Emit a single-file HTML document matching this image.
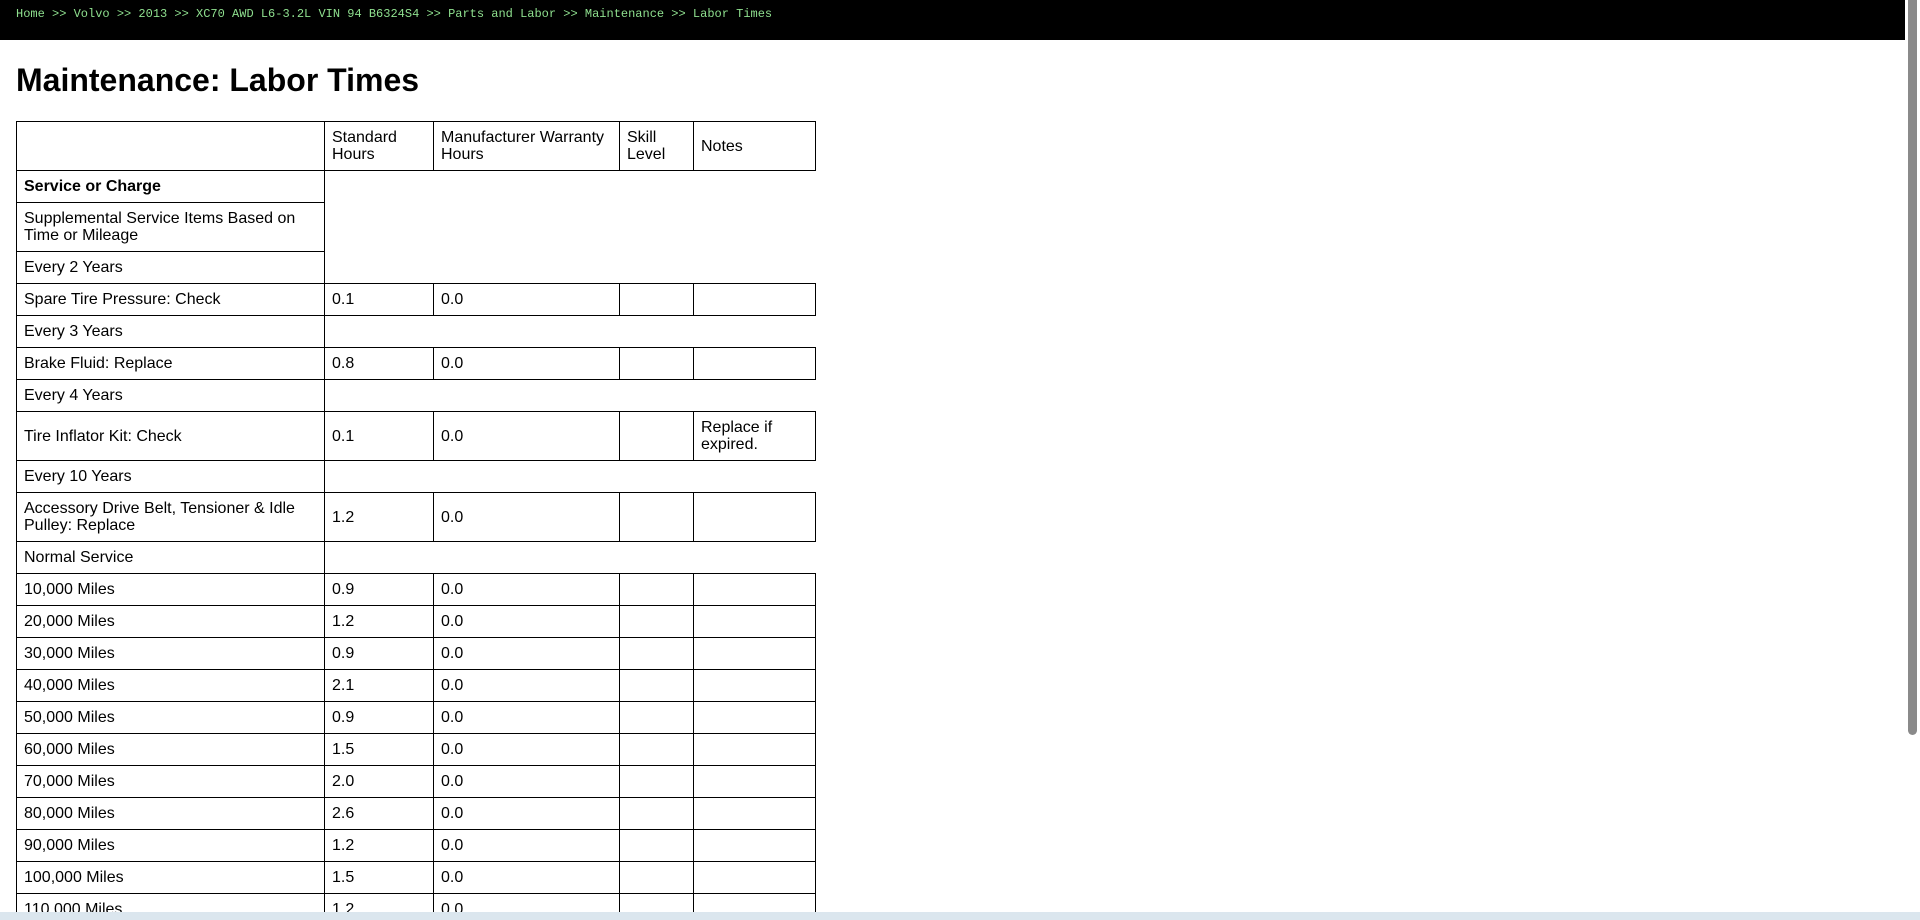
<!DOCTYPE html>
<html><head><meta charset="utf-8"><style>
html,body{margin:0;padding:0;background:#fff;overflow:hidden;width:1920px;height:920px}
#w{position:relative;width:1920px;height:920px;overflow:hidden}
.bar{position:absolute;left:0;top:0;width:1905px;height:40px;background:#000}
.bc{position:absolute;left:16px;top:7px;font-family:"Liberation Mono",monospace;font-size:12px;color:#8fe08f;white-space:pre}
h1{position:absolute;left:16px;top:62px;margin:0;font-family:"Liberation Sans",sans-serif;font-size:32px;font-weight:bold;color:#000}
table{position:absolute;left:16px;top:121px;border-collapse:collapse;font-family:"Liberation Sans",sans-serif;font-size:16px;line-height:17px;color:#000;table-layout:fixed;width:799px}
td{border:1px solid #000;padding:7px 7px;vertical-align:middle}
td.n{border:none}
.vs{position:absolute;right:3px;top:0;width:9px;height:735px;background:#8a8a8a;border-radius:0 0 5px 5px}
.hs{position:absolute;left:0;top:912px;width:1920px;height:8px;background:#dbe6ee}
</style></head><body><div id="w">
<div class="bar"><div class="bc">Home &gt;&gt; Volvo &gt;&gt; 2013 &gt;&gt; XC70 AWD L6-3.2L VIN 94 B6324S4 &gt;&gt; Parts and Labor &gt;&gt; Maintenance &gt;&gt; Labor Times</div></div>
<h1>Maintenance: Labor Times</h1>
<table>
<colgroup><col style="width:308px"><col style="width:109px"><col style="width:186px"><col style="width:74px"><col style="width:122px"></colgroup>
<tr><td></td><td>Standard Hours</td><td>Manufacturer Warranty Hours</td><td>Skill Level</td><td>Notes</td></tr>
<tr><td><b>Service or Charge</b></td><td class="n" colspan="4"></td></tr>
<tr><td>Supplemental Service Items Based on Time or Mileage</td><td class="n" colspan="4"></td></tr>
<tr><td>Every 2 Years</td><td class="n" colspan="4"></td></tr>
<tr><td>Spare Tire Pressure: Check</td><td>0.1</td><td>0.0</td><td></td><td></td></tr>
<tr><td>Every 3 Years</td><td class="n" colspan="4"></td></tr>
<tr><td>Brake Fluid: Replace</td><td>0.8</td><td>0.0</td><td></td><td></td></tr>
<tr><td>Every 4 Years</td><td class="n" colspan="4"></td></tr>
<tr><td>Tire Inflator Kit: Check</td><td>0.1</td><td>0.0</td><td></td><td>Replace if expired.</td></tr>
<tr><td>Every 10 Years</td><td class="n" colspan="4"></td></tr>
<tr><td>Accessory Drive Belt, Tensioner &amp; Idle Pulley: Replace</td><td>1.2</td><td>0.0</td><td></td><td></td></tr>
<tr><td>Normal Service</td><td class="n" colspan="4"></td></tr>
<tr><td>10,000 Miles</td><td>0.9</td><td>0.0</td><td></td><td></td></tr>
<tr><td>20,000 Miles</td><td>1.2</td><td>0.0</td><td></td><td></td></tr>
<tr><td>30,000 Miles</td><td>0.9</td><td>0.0</td><td></td><td></td></tr>
<tr><td>40,000 Miles</td><td>2.1</td><td>0.0</td><td></td><td></td></tr>
<tr><td>50,000 Miles</td><td>0.9</td><td>0.0</td><td></td><td></td></tr>
<tr><td>60,000 Miles</td><td>1.5</td><td>0.0</td><td></td><td></td></tr>
<tr><td>70,000 Miles</td><td>2.0</td><td>0.0</td><td></td><td></td></tr>
<tr><td>80,000 Miles</td><td>2.6</td><td>0.0</td><td></td><td></td></tr>
<tr><td>90,000 Miles</td><td>1.2</td><td>0.0</td><td></td><td></td></tr>
<tr><td>100,000 Miles</td><td>1.5</td><td>0.0</td><td></td><td></td></tr>
<tr><td>110,000 Miles</td><td>1.2</td><td>0.0</td><td></td><td></td></tr>
</table>
<div class="vs"></div>
<div class="hs"></div>
</div></body></html>
